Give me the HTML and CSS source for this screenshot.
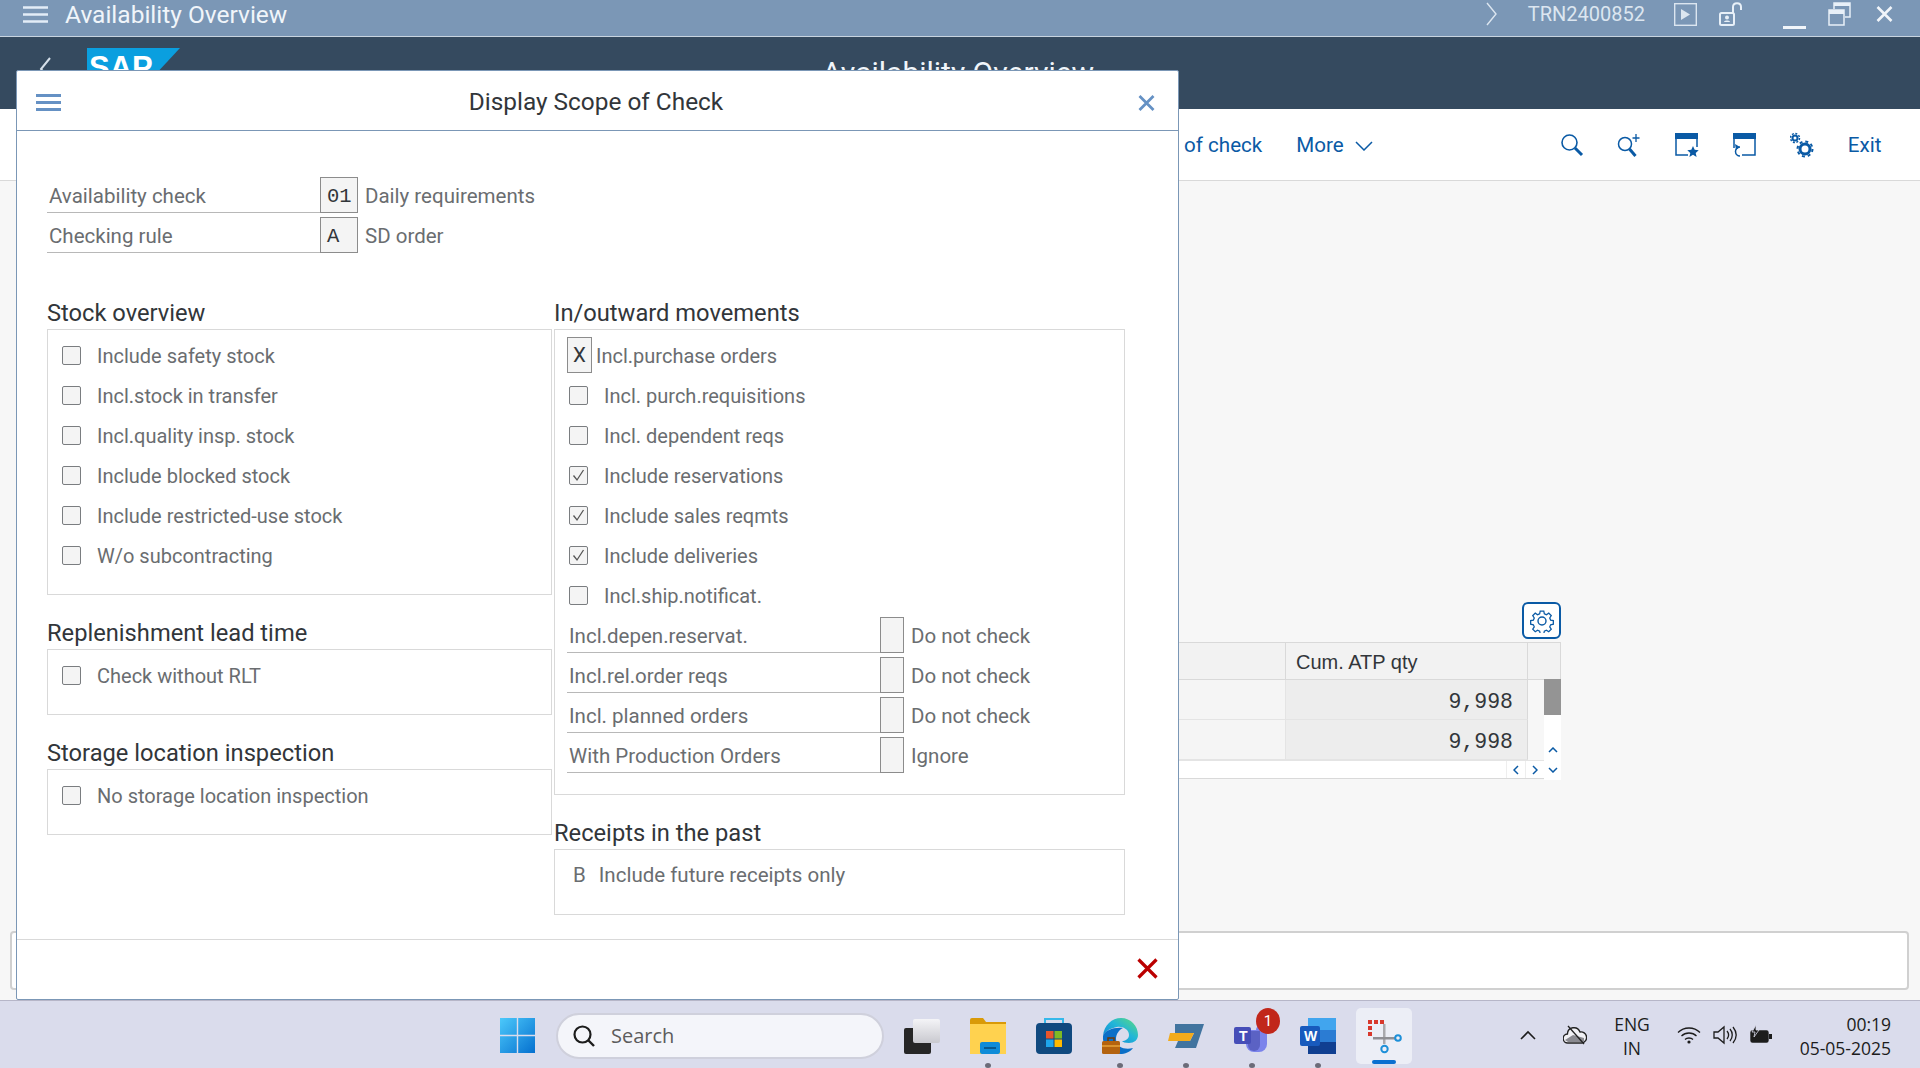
FILE: index.html
```html
<!DOCTYPE html>
<html lang="en">
<head>
    <meta charset="UTF-8">
    <title>Availability Overview</title>
    <link rel="stylesheet" href="styles.css">
</head>
<body>
<div class="page">
    <div class="titlebar">
        <svg class="menu-icon" width="25" height="17" viewBox="0 0 25 17"><path d="M0 1.5h25M0 8.5h25M0 15.5h25" stroke="#e3edf7" stroke-width="2.4"/></svg>
        <span class="app-title">Availability Overview</span>
        <svg class="tb-chevron" width="12" height="24" viewBox="0 0 12 24"><path d="M1 1l9 11-9 11" fill="none" stroke="#dce6f0" stroke-width="1.4"/></svg>
        <span class="user">TRN2400852</span>
        <svg class="tb-play" width="23" height="23" viewBox="0 0 23 23"><rect x=".7" y=".7" width="21.6" height="21.6" fill="none" stroke="#dce6f0" stroke-width="1.4"/><path d="M7 6l9 5.500-9 5.500z" fill="#dce6f0"/></svg>
        <svg class="tb-lock" width="24" height="24" viewBox="0 0 24 24"><rect x="1" y="11" width="14" height="12" rx="1.500" fill="none" stroke="#e8f0f8" stroke-width="2"/><circle cx="8" cy="15.500" r="2" fill="#e8f0f8"/><path d="M5 20c0-2 6-2 6 0z" fill="#e8f0f8"/><path d="M14 11V5c0-5 8-5 8 0v3" fill="none" stroke="#e8f0f8" stroke-width="2"/></svg>
        <span class="tb-min"></span>
        <svg class="tb-restore" width="23" height="24" viewBox="0 0 23 24"><rect x="1" y="8" width="15" height="15" fill="none" stroke="#e8f0f8" stroke-width="1.500"/><path d="M1 8h15v4H1z" fill="#e8f0f8"/><path d="M6 7V1h16v14h-5" fill="none" stroke="#e8f0f8" stroke-width="1.500"/><path d="M6 1h16v3H6z" fill="#e8f0f8"/></svg>
        <svg class="tb-close" width="17" height="16" viewBox="0 0 17 16"><path d="M1.500 1l14 14M15.500 1l-14 14" stroke="#f1f5fa" stroke-width="2.600"/></svg>
    </div>

    <div class="shellbar">
        <svg class="back" width="12" height="24" viewBox="0 0 12 24"><path d="M11 1L2 12l9 11" fill="none" stroke="#d5dfe9" stroke-width="2"/></svg>
        <div class="logo"><span>SAP</span></div>
        <span class="shell-title">Availability Overview</span>
    </div>

    <div class="toolbar">
        <a class="tool-link of-check">of check</a>
        <a class="tool-link more">More</a>
        <svg class="more-chev" width="18" height="10" viewBox="0 0 18 10"><path d="M1 1l8 8 8-8" fill="none" stroke="#0a5aa5" stroke-width="1.500"/></svg>
        <svg class="t-search" width="24" height="24" viewBox="0 0 24 24"><circle cx="9.500" cy="9.500" r="7.500" fill="none" stroke="#0a5aa5" stroke-width="1.600"/><path d="M15 15l7 7" stroke="#0a5aa5" stroke-width="3"/></svg>
        <svg class="t-searchplus" width="24" height="24" viewBox="0 0 24 24"><circle cx="8" cy="11" r="6.500" fill="none" stroke="#0a5aa5" stroke-width="1.500"/><path d="M12.500 16l6 7" stroke="#0a5aa5" stroke-width="3"/><path d="M19 1v8M15.500 5h7" stroke="#0a5aa5" stroke-width="1.300"/></svg>
        <svg class="t-layout" width="24" height="24" viewBox="0 0 24 24"><rect x="1" y="1" width="21" height="21" fill="none" stroke="#0a5aa5" stroke-width="1.500"/><path d="M0 0h23v6H0z" fill="#0a5aa5"/><path d="M13 14h11v10H13z" fill="#fff"/><path d="M18 13l1.700 3.800 4 .4-3 2.700.9 4-3.600-2.100-3.600 2.100.9-4-3-2.700 4-.4z" fill="#0a5aa5"/></svg>
        <svg class="t-layout2" width="24" height="24" viewBox="0 0 24 24"><path d="M2 15V1h21v21H10" fill="none" stroke="#0a5aa5" stroke-width="1.500"/><path d="M1 0h23v6H1z" fill="#0a5aa5"/><path d="M8 14a4.500 4.500 0 1 0 0 9" fill="none" stroke="#0a5aa5" stroke-width="1.500"/><path d="M3 11l5 3-4 3z" fill="#0a5aa5"/></svg>
        <svg class="t-gears" width="24" height="26" viewBox="0 0 24 26"><circle cx="15" cy="17" r="5" fill="none" stroke="#0a5aa5" stroke-width="3"/><circle cx="15" cy="17" r="7.500" fill="none" stroke="#0a5aa5" stroke-width="2" stroke-dasharray="3 2.900"/><circle cx="5" cy="6" r="2.500" fill="none" stroke="#0a5aa5" stroke-width="2"/><circle cx="5" cy="6" r="4.500" fill="none" stroke="#0a5aa5" stroke-width="1.500" stroke-dasharray="2 1.500"/></svg>
        <a class="tool-link exit">Exit</a>
    </div>

    <main class="content">
        <div class="gear-btn">
            <svg width="24" height="24" viewBox="0 0 24 24"><path d="M10 1h4l.6 3 2.300 1 2.600-1.700 2.800 2.800-1.700 2.600 1 2.300 3 .6v4l-3 .6-1 2.300 1.700 2.600-2.800 2.800-2.600-1.700-2.300 1-.6 3h-4l-.6-3-2.300-1-2.600 1.700-2.800-2.800 1.700-2.600-1-2.300-3-.6v-4l3-.6 1-2.300-1.700-2.600 2.800-2.800 2.600 1.700 2.300-1z" transform="translate(1.200 1.200) scale(.9)" fill="none" stroke="#0a5aa5" stroke-width="1.400"/><circle cx="12" cy="12" r="4" fill="none" stroke="#0a5aa5" stroke-width="1.400"/></svg>
        </div>
        <div class="atp-table">
            <div class="th"></div>
            <div class="th th-atp">Cum. ATP qty</div>
            <div class="th th-side"></div>

            <div class="td"></div>
            <div class="td td-num">9,998</div>
            <div class="td-gap"></div>
            <div class="vscroll">
                <div class="thumb"></div>
                <div class="track"></div>
                <div class="sbtn"><svg width="10" height="6" viewBox="0 0 10 6"><path d="M1 5l4-4 4 4" fill="none" stroke="#0a5aa5" stroke-width="1.500"/></svg></div>
            </div>

            <div class="td"></div>
            <div class="td td-num">9,998</div>
            <div class="td-gap"></div>

            <div class="hscroll">
                <div class="sbtn"><svg width="6" height="10" viewBox="0 0 6 10"><path d="M5 1L1 5l4 4" fill="none" stroke="#0a5aa5" stroke-width="1.500"/></svg></div>
                <div class="sbtn"><svg width="6" height="10" viewBox="0 0 6 10"><path d="M1 1l4 4-4 4" fill="none" stroke="#0a5aa5" stroke-width="1.500"/></svg></div>
            </div>
            <div class="sbtn"><svg width="10" height="6" viewBox="0 0 10 6"><path d="M1 1l4 4 4-4" fill="none" stroke="#0a5aa5" stroke-width="1.500"/></svg></div>
        </div>
        <div class="message-bar"></div>
    </main>

    <footer class="taskbar">
        <svg class="win-logo" width="35" height="35" viewBox="0 0 35 35">
            <defs>
                <linearGradient id="winblue" x1="0" y1="0" x2="1" y2="1"><stop offset="0" stop-color="#4cc9fb"/><stop offset="1" stop-color="#0570cf"/></linearGradient>
                <linearGradient id="edgetop" x1="0" y1="1" x2="1" y2="0"><stop offset="0" stop-color="#0c7fd4"/><stop offset=".55" stop-color="#22b6d8"/><stop offset="1" stop-color="#5fdc7a"/></linearGradient>
                <linearGradient id="viewfade" x1="0" y1="0" x2="0" y2="1"><stop offset="0" stop-color="#f4f4f7"/><stop offset="1" stop-color="#c9c9cf"/></linearGradient>
            </defs>
            <path d="M0 0h16.800v16.800H0zM18.200 0H35v16.800H18.200zM0 18.200h16.800V35H0zM18.200 18.200H35V35H18.200z" fill="url(#winblue)"/>
        </svg>
        <div class="search-pill">
            <svg width="24" height="24" viewBox="0 0 24 24"><circle cx="10.500" cy="10.500" r="8" fill="none" stroke="#1c1c1c" stroke-width="2.200"/><path d="M16 16l6 6" stroke="#1c1c1c" stroke-width="2.400"/></svg>
            <span>Search</span>
        </div>
        <div class="apps">
            <div class="app">
                <svg class="taskview" width="36" height="35" viewBox="0 0 36 35"><rect x="0" y="9" width="27" height="26" rx="2" fill="#262626"/><rect x="9" y="0" width="27" height="24" rx="2" fill="url(#viewfade)"/></svg>
            </div>
            <div class="app">
                <svg width="36" height="36" viewBox="0 0 36 36"><path d="M0 2a2 2 0 0 1 2-2h11l3 4h20v32H0z" fill="#d99a08"/><path d="M0 6h36v30H0z" fill="#ffd24f"/><rect x="10" y="24" width="20" height="12" rx="2" fill="#0e8bd8"/><path d="M14 30h12" stroke="#06588f" stroke-width="2"/></svg>
                <i class="dot"></i>
            </div>
            <div class="app">
                <svg width="36" height="36" viewBox="0 0 36 36"><path d="M9 6V1h18v5" fill="none" stroke="#35b8ea" stroke-width="2"/><rect x="0" y="5" width="36" height="31" rx="4" fill="#10497f"/><path d="M10 13h7.500v7.500H10z" fill="#e8552c"/><path d="M18.500 13H26v7.500h-7.500z" fill="#7fba24"/><path d="M10 21.500h7.500V29H10z" fill="#1ea5ec"/><path d="M18.500 21.500H26V29h-7.500z" fill="#ffb900"/></svg>
            </div>
            <div class="app">
                <svg width="36" height="36" viewBox="0 0 36 36">
                    <path d="M1 18C2 7 10 0 19 0c10 0 17 8 17 17 0 5-4 8-9 8-4 0-6-1-7-2 3 0 7-2 7-6 0-6-7-9-12-8-6 1-12 4-14 9z" fill="url(#edgetop)"/>
                    <path d="M1 18c-1 9 6 18 17 18 5 0 10-2 13-6-7 2-17 0-17-9 0-5 3-9 7-11-9-1-18 2-20 8z" fill="#0b6fc7"/>
                    <rect x="0" y="23" width="18" height="13" rx="1.500" fill="#b4630f"/><path d="M6 23v-3h6v3" fill="none" stroke="#6e3a08" stroke-width="1.500"/><path d="M0 28h18" stroke="#e8a33a" stroke-width="1.500"/>
                </svg>
                <i class="dot"></i>
            </div>
            <div class="app">
                <svg width="36" height="24" viewBox="0 0 36 24"><path d="M7 0h29l-8 24H7l3-7h12l4-8H7z" fill="#41749f"/><path d="M2 9h24l-4 8H0z" fill="#f2ab1c"/></svg>
                <i class="dot"></i>
            </div>
            <div class="app">
                <svg width="36" height="36" viewBox="0 0 36 36"><circle cx="27" cy="12" r="5" fill="#7b83eb"/><path d="M12 12h21v14a8 8 0 0 1-8 8h-5a8 8 0 0 1-8-8z" fill="#7b83eb"/><path d="M14 13h12v14a6 6 0 0 1-12 0z" fill="#5b62c4"/><rect x="0" y="9" width="17" height="17" rx="2" fill="#464eb8"/></svg>
                <span class="teams-t">T</span>
                <span class="badge">1</span>
                <i class="dot"></i>
            </div>
            <div class="app">
                <svg width="36" height="36" viewBox="0 0 36 36"><path d="M8 0h28v12H8z" fill="#41a5ee"/><path d="M8 12h28v12H8z" fill="#2b7cd3"/><path d="M8 24h28v12H8z" fill="#103f91"/><rect x="0" y="8" width="20" height="20" rx="2" fill="#185abd"/></svg>
                <span class="word-w">W</span>
                <i class="dot"></i>
            </div>
            <div class="app app-active">
                <svg width="36" height="36" viewBox="0 0 36 36"><path d="M2 2h4v4H2zM8 2h4v4H8zM14 2h4v4h-4zM2 8h4v4H2zM2 14h4v4H2z" fill="#d8382c"/><path d="M17 6h2.500v20H17z" fill="#a9a9ad"/><path d="M7 19h22v2.500H7z" fill="#8f8f94"/><circle cx="32" cy="20" r="2.800" fill="none" stroke="#1c8fd8" stroke-width="2"/><circle cx="18.500" cy="31" r="3.200" fill="none" stroke="#1c8fd8" stroke-width="2"/></svg>
                <i class="active-bar"></i>
            </div>
        </div>
        <div class="tray">
            <svg class="tr-chev" width="16" height="10" viewBox="0 0 16 10"><path d="M1 9l7-7 7 7" fill="none" stroke="#1c1c1c" stroke-width="1.600"/></svg>
            <svg class="tr-cloud" width="24" height="20" viewBox="0 0 24 20"><path d="M5 18a4.500 4.500 0 0 1-.6-9A6.500 6.500 0 0 1 17 7a5.500 5.500 0 0 1 2 11z" fill="#f1f1f5" stroke="#222" stroke-width="1.400"/><path d="M2 15l8-5 11 3v4H5z" fill="#8a8a90"/><path d="M5 1l16 18" stroke="#222" stroke-width="1.300"/></svg>
            <div class="lang">ENG<br>IN</div>
            <svg class="tr-wifi" width="24" height="18" viewBox="0 0 24 18"><path d="M1 6.500c6-6 16-6 22 0M4.500 10c4-4 11-4 15 0M8 13.500c2-2 6-2 8 0" fill="none" stroke="#1c1c1c" stroke-width="1.300"/><circle cx="12" cy="16" r="1.600" fill="#1c1c1c"/></svg>
            <svg class="tr-vol" width="24" height="20" viewBox="0 0 24 20"><path d="M1 7h4l6-5v16l-6-5H1z" fill="none" stroke="#1c1c1c" stroke-width="1.300"/><path d="M14 6c2 2.500 2 5.500 0 8M17 4c3 3.500 3 8.500 0 12M20 2c4 5 4 11 0 16" fill="none" stroke="#1c1c1c" stroke-width="1.300"/></svg>
            <svg class="tr-bat" width="24" height="20" viewBox="0 0 24 20"><rect x="2" y="6" width="17" height="11" rx="1.500" fill="#1c1c1c" stroke="#1c1c1c" stroke-width="1.400"/><path d="M20 9h3v5h-3z" fill="#1c1c1c"/><path d="M7 0L3 7h3l-1 5 5-7H7z" fill="#1c1c1c" stroke="#dadcec" stroke-width=".8"/></svg>
            <div class="clock"><span>00:19</span><span>05-05-2025</span></div>
        </div>
    </footer>
</div>

<div class="dialog">
    <div class="dialog-head">
        <svg class="dlg-menu" width="25" height="17" viewBox="0 0 25 17"><path d="M0 1.500h25M0 8.500h25M0 15.500h25" stroke="#6591c4" stroke-width="3"/></svg>
        <span class="dlg-title">Display Scope of Check</span>
        <svg class="dlg-close" width="17" height="16" viewBox="0 0 17 16"><path d="M1.500 1l14 14M15.500 1l-14 14" stroke="#6591c4" stroke-width="2.800"/></svg>
    </div>

    <div class="dialog-body">
        <div class="top-fields">
            <div class="field">
                <label class="field-label">Availability check</label>
                <span class="field-box mono">01</span>
                <span class="field-text">Daily requirements</span>
            </div>
            <div class="field">
                <label class="field-label">Checking rule</label>
                <span class="field-box mono">A</span>
                <span class="field-text">SD order</span>
            </div>
        </div>

        <div class="columns">
            <div class="col col-left">
                <h3 class="sec-title">Stock overview</h3>
                <div class="group group-stock">
                    <div class="check"><i class="cb"></i>Include safety stock</div>
                    <div class="check"><i class="cb"></i>Incl.stock in transfer</div>
                    <div class="check"><i class="cb"></i>Incl.quality insp. stock</div>
                    <div class="check"><i class="cb"></i>Include blocked stock</div>
                    <div class="check"><i class="cb"></i>Include restricted-use stock</div>
                    <div class="check"><i class="cb"></i>W/o subcontracting</div>
                </div>
                <h3 class="sec-title">Replenishment lead time</h3>
                <div class="group group-small">
                    <div class="check"><i class="cb"></i>Check without RLT</div>
                </div>
                <h3 class="sec-title">Storage location inspection</h3>
                <div class="group group-small">
                    <div class="check"><i class="cb"></i>No storage location inspection</div>
                </div>
            </div>

            <div class="col col-right">
                <h3 class="sec-title">In/outward movements</h3>
                <div class="group group-moves">
                    <div class="check check-x"><span class="x-box">X</span>Incl.purchase orders</div>
                    <div class="check"><i class="cb"></i>Incl. purch.requisitions</div>
                    <div class="check"><i class="cb"></i>Incl. dependent reqs</div>
                    <div class="check"><i class="cb cb-on"><svg width="13" height="13" viewBox="0 0 13 13"><path d="M1.500 6.500l3.500 4.500 6.500-10" fill="none" stroke="#555" stroke-width="1.300"/></svg></i>Include reservations</div>
                    <div class="check"><i class="cb cb-on"><svg width="13" height="13" viewBox="0 0 13 13"><path d="M1.500 6.500l3.500 4.500 6.500-10" fill="none" stroke="#555" stroke-width="1.300"/></svg></i>Include sales reqmts</div>
                    <div class="check"><i class="cb cb-on"><svg width="13" height="13" viewBox="0 0 13 13"><path d="M1.500 6.500l3.500 4.500 6.500-10" fill="none" stroke="#555" stroke-width="1.300"/></svg></i>Include deliveries</div>
                    <div class="check"><i class="cb"></i>Incl.ship.notificat.</div>
                    <div class="field field-sm">
                        <label class="field-label">Incl.depen.reservat.</label>
                        <span class="field-box"></span>
                        <span class="field-text">Do not check</span>
                    </div>
                    <div class="field field-sm">
                        <label class="field-label">Incl.rel.order reqs</label>
                        <span class="field-box"></span>
                        <span class="field-text">Do not check</span>
                    </div>
                    <div class="field field-sm">
                        <label class="field-label">Incl. planned orders</label>
                        <span class="field-box"></span>
                        <span class="field-text">Do not check</span>
                    </div>
                    <div class="field field-sm">
                        <label class="field-label">With Production Orders</label>
                        <span class="field-box"></span>
                        <span class="field-text">Ignore</span>
                    </div>
                </div>
                <h3 class="sec-title">Receipts in the past</h3>
                <div class="group group-small">
                    <div class="receipt"><span class="receipt-code">B</span>Include future receipts only</div>
                </div>
            </div>
        </div>
    </div>

    <div class="dialog-foot">
        <svg width="21" height="21" viewBox="0 0 21 21"><path d="M1.500 1.500l18 18M19.500 1.500l-18 18" stroke="#bb0000" stroke-width="3.200"/></svg>
    </div>
</div>
</body>
</html>
```

FILE: styles.css
```css
* {
    box-sizing: border-box;
}

html, body {
    margin: 0;
    height: 100%;
    overflow: hidden;
}

body {
    font-family: Roboto, "Liberation Sans", sans-serif;
    font-size: 20.5px;
    color: #6a6d70;
    background-color: #f7f7f7;
}

.page {
    display: flex;
    flex-direction: column;
    height: 1068px;
}

/* Title bar */
.titlebar {
    display: flex;
    align-items: center;
    flex: none;
    height: 37px;
    padding: 0 0 8px 23px;
    background-color: #7b97b6;
    border-bottom: 1px solid #c8d4e0;
    color: #f0f5fa;
}

.app-title {
    margin-left: 17px;
    font-size: 24.5px;
}

.tb-chevron {
    margin-left: auto;
}

.user {
    margin-left: 30px;
    font-size: 20px;
    color: #dce6f0;
}

.tb-play {
    margin-left: 29px;
}

.tb-lock {
    margin-left: 22px;
}

.tb-min {
    width: 23px;
    height: 3px;
    margin: 27px 0 0 40px;
    background-color: #f1f5fa;
}

.tb-restore {
    margin-left: 22px;
}

.tb-close {
    margin: 0 27px 0 25px;
}

/* Dark shell bar */
.shellbar {
    display: flex;
    align-items: flex-start;
    flex: none;
    height: 72px;
    background-color: #354a5f;
    overflow: hidden;
}

.back {
    margin: 20px 0 0 39px;
}

.logo {
    width: 93px;
    height: 60px;
    margin: 11px 0 0 36px;
    padding-left: 2px;
    background-color: #0a9fdf;
    clip-path: polygon(0 0, 100% 0, 40% 100%, 0 100%);
}

.logo span {
    display: block;
    font-family: "Liberation Sans", sans-serif;
    font-weight: bold;
    font-size: 31px;
    line-height: 40px;
    color: #fff;
}

.shell-title {
    margin: 18px 0 0 642px;
    font-size: 30px;
    color: #f0f5fa;
}

/* Toolbar */
.toolbar {
    display: flex;
    align-items: center;
    flex: none;
    height: 72px;
    padding-left: 1184px;
    background-color: #fff;
    border-bottom: 1px solid #d9d9d9;
}

.tool-link {
    font-size: 20.6px;
    color: #0a5aa5;
}

.more {
    margin-left: 34px;
}

.more-chev {
    margin: 2px 0 0 11px;
}

.t-search {
    margin-left: 187px;
}

.t-searchplus {
    margin-left: 33px;
}

.t-layout {
    margin-left: 34px;
}

.t-layout2 {
    margin-left: 33px;
}

.t-gears {
    margin-left: 34px;
}

.exit {
    margin-left: 34px;
}

/* Background content */
.content {
    display: flex;
    flex-direction: column;
    align-items: flex-end;
    flex: 1;
    padding: 421px 11px 0 10px;
}

.gear-btn {
    display: flex;
    align-items: center;
    justify-content: center;
    width: 39px;
    height: 37px;
    margin-right: 348px;
    border: 2px solid #0a5aa5;
    border-radius: 6px;
    background-color: #fff;
}

.atp-table {
    display: grid;
    grid-template-columns: 286px 242px 16px 17px;
    grid-template-rows: 38px 40px 40px 18px;
    margin: 3px 348px 0 0;
    border-bottom: 1px solid #d9d9d9;
}

.th {
    padding: 0 10px;
    background-color: #f2f2f2;
    border-top: 1px solid #d9d9d9;
    border-bottom: 1px solid #d9d9d9;
    border-right: 1px solid #d9d9d9;
    line-height: 38px;
    font-family: "Liberation Sans", sans-serif;
    font-size: 20px;
    color: #32363a;
}

.th-side {
    grid-column: span 2;
}

.td {
    background-color: #f5f5f5;
    border-right: 1px solid #e4e4e4;
    border-bottom: 1px solid #e4e4e4;
}

.td-num {
    padding-right: 14px;
    background-color: #ededed;
    border-right: 1px solid #d9d9d9;
    text-align: right;
    font-family: "Liberation Mono", monospace;
    font-size: 21.5px;
    line-height: 45px;
    color: #32363a;
}

.vscroll {
    display: flex;
    flex-direction: column;
    grid-row: span 2;
    background-color: #fff;
}

.thumb {
    height: 36px;
    margin-top: -1px;
    background-color: #949494;
}

.track {
    flex: 1;
}

.sbtn {
    display: flex;
    align-items: center;
    justify-content: center;
    flex: none;
    height: 20px;
    background-color: #fff;
}

.hscroll {
    display: flex;
    justify-content: flex-end;
    grid-column: span 3;
    background-color: #fff;
    border-top: 1px solid #e4e4e4;
}

.hscroll .sbtn {
    width: 19px;
    height: 17px;
    border-left: 1px solid #eee;
}

.message-bar {
    align-self: stretch;
    height: 59px;
    margin-top: 152px;
    background-color: #fff;
    border: 2px solid #d0d0d0;
    border-radius: 4px;
}

/* Windows taskbar */
.taskbar {
    display: flex;
    align-items: center;
    flex: none;
    height: 68px;
    padding-left: 500px;
    background-color: #dadcec;
    border-top: 1px solid #b6b6c8;
}

.win-logo {
    margin-top: 2px;
}

.search-pill {
    display: flex;
    align-items: center;
    width: 328px;
    height: 46px;
    margin: 2px 0 0 21px;
    padding-left: 14px;
    background-color: #f4f5fa;
    border: 2px solid #cfd0dc;
    border-radius: 23px;
}

.search-pill span {
    margin-left: 15px;
    font-family: "Open Sans", sans-serif;
    font-size: 20px;
    color: #5c5c5c;
}

.apps {
    display: flex;
    margin-left: 5px;
}

.app {
    position: relative;
    display: flex;
    align-items: center;
    justify-content: center;
    width: 66px;
    height: 56px;
    margin-top: 3px;
}

.dot {
    position: absolute;
    left: 30px;
    bottom: -4px;
    width: 6px;
    height: 5px;
    border-radius: 50%;
    background-color: #6b6b78;
}

.badge {
    position: absolute;
    left: 37px;
    top: 0;
    width: 24px;
    height: 26px;
    border-radius: 50%;
    background-color: #c1271b;
    color: #fff;
    font-size: 15px;
    line-height: 26px;
    text-align: center;
}

.teams-t, .word-w {
    position: absolute;
    font-family: "Liberation Sans", sans-serif;
    font-size: 14px;
    font-weight: bold;
    color: #fff;
}

.teams-t {
    left: 20px;
    top: 20px;
}

.word-w {
    left: 19px;
    top: 20px;
}

.app-active {
    width: 56px;
    margin-left: 5px;
    background-color: #eceef6;
    border-radius: 5px;
}

.active-bar {
    position: absolute;
    left: 16px;
    bottom: 0;
    width: 24px;
    height: 4px;
    border-radius: 2px;
    background-color: #0a6fd0;
}

.tray {
    display: flex;
    align-items: center;
    margin-left: auto;
    padding-right: 29px;
    font-family: "Open Sans", sans-serif;
    font-size: 17.5px;
    color: #1c1c1c;
}

.tr-chev {
    margin-left: -1px;
}

.tr-cloud {
    margin-left: 27px;
}

.lang {
    width: 50px;
    margin: 2px 0 0 20px;
    text-align: center;
    line-height: 24px;
}

.tr-wifi {
    margin-left: 20px;
}

.tr-vol {
    margin-left: 12px;
}

.tr-bat {
    margin-left: 12px;
}

.clock {
    display: flex;
    flex-direction: column;
    align-items: flex-end;
    width: 118px;
    margin-top: 2px;
    line-height: 24px;
}

/* Dialog */
.dialog {
    position: absolute;
    left: 16px;
    top: 70px;
    display: flex;
    flex-direction: column;
    width: 1163px;
    height: 930px;
    background-color: #fff;
    border: 1px solid #7b97b6;
    border-radius: 2px;
}

.dialog-head {
    display: flex;
    align-items: center;
    justify-content: space-between;
    flex: none;
    height: 60px;
    padding: 4px 23px 0 19px;
    border-bottom: 1px solid #7b97b6;
}

.dlg-title {
    margin: 0 7px 2px 0;
    font-size: 24.4px;
    color: #32363a;
}

.dialog-body {
    flex: 1;
    padding: 46px 0 0 30px;
}

.field {
    display: flex;
    align-items: stretch;
    height: 36px;
    margin-bottom: 4px;
    line-height: 38px;
}

.field-label {
    width: 273px;
    padding-left: 2px;
    border-bottom: 1px solid #b8b8b8;
}

.field-box {
    width: 38px;
    padding-left: 6px;
    background-color: #f4f4f4;
    border: 1px solid #8c8c8c;
    color: #32363a;
}

.field-box.mono {
    font-family: "Liberation Mono", monospace;
    font-size: 20.5px;
}

.field-text {
    margin-left: 7px;
}

.columns {
    display: flex;
    gap: 2px;
    margin-top: 44px;
}

.col-left {
    width: 505px;
}

.col-right {
    width: 571px;
}

.sec-title {
    height: 32px;
    margin: 22px 0 0;
    font-size: 23.7px;
    font-weight: normal;
    line-height: 32px;
    color: #32363a;
}

.sec-title:first-child {
    margin-top: 0;
}

.group {
    padding: 5px 12px 0;
    border: 1px solid #d9d9d9;
}

.group-stock {
    height: 266px;
}

.group-small {
    height: 66px;
}

.group-moves {
    height: 466px;
}

.check {
    display: flex;
    align-items: center;
    height: 40px;
    padding-top: 1px;
    font-size: 20px;
}

.cb {
    display: flex;
    align-items: center;
    justify-content: center;
    flex: none;
    width: 19px;
    height: 19px;
    margin: -1px 16px 0 2px;
    background-color: #f4f4f4;
    border: 1px solid #7a7d80;
    border-radius: 2px;
}

.x-box {
    width: 25px;
    height: 36px;
    margin: -1px 4px 0 0;
    background-color: #f4f4f4;
    border: 1px solid #8c8c8c;
    color: #32363a;
    font-size: 20.5px;
    line-height: 34px;
    text-align: center;
}

.field-sm {
    margin: 2px 0 4px;
}

.field-sm .field-label {
    width: 313px;
}

.field-sm .field-box {
    width: 24px;
}

.field-sm .field-text {
    margin-left: 7px;
}

.receipt {
    height: 40px;
    line-height: 40px;
    padding-left: 6px;
}

.receipt-code {
    margin-right: 13px;
}

.dialog-foot {
    display: flex;
    align-items: center;
    justify-content: flex-end;
    flex: none;
    height: 60px;
    padding: 0 20px 3px 0;
    border-top: 1px solid #d9d9d9;
}
```
